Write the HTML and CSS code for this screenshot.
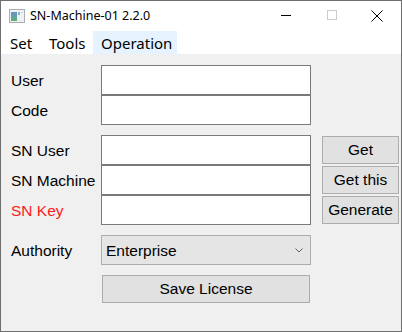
FILE: index.html
```html
<!DOCTYPE html>
<html lang="en">
<head>
    <meta charset="UTF-8">
    <title>SN-Machine-01 2.2.0</title>
    <link rel="stylesheet" href="styles.css">
</head>
<body>
    <div class="window">
        <div class="titlebar">
            <svg class="app-icon" width="16" height="14" viewBox="0 0 16 14">
                <defs>
                    <linearGradient id="g" x1="0" y1="0" x2="0" y2="1">
                        <stop offset="0" stop-color="#6a8fc9"/>
                        <stop offset="1" stop-color="#5fb07a"/>
                    </linearGradient>
                </defs>
                <rect x="0.5" y="0.5" width="15" height="13" fill="#eef1f3" stroke="#a9adb1"/>
                <rect x="2" y="3" width="6" height="9" fill="url(#g)"/>
                <rect x="9" y="3" width="2" height="3" fill="#8fb5c9"/>
                <rect x="12" y="3" width="2" height="1" fill="#c5d3da"/>
            </svg>
            <span class="title">SN-Machine-01 2.2.0</span>
            <div class="controls">
                <span class="ctl min"></span>
                <span class="ctl max"></span>
                <span class="ctl close">
                    <svg width="12" height="12" viewBox="0 0 12 12">
                        <path d="M0.5 0.5 L11.5 11.5 M11.5 0.5 L0.5 11.5" stroke="#000" stroke-width="1"/>
                    </svg>
                </span>
            </div>
        </div>
        <div class="menubar">
            <span class="menu-item set">Set</span>
            <span class="menu-item tools">Tools</span>
            <span class="menu-item active">Operation</span>
        </div>
        <div class="content">
            <div class="group">
                <div class="row"><label>User</label><input class="field" type="text"></div>
                <div class="row"><label>Code</label><input class="field" type="text"></div>
            </div>
            <div class="group sn">
                <div class="fields">
                    <div class="row"><label>SN User</label><input class="field" type="text"></div>
                    <div class="row"><label>SN Machine</label><input class="field" type="text"></div>
                    <div class="row"><label class="red">SN Key</label><input class="field" type="text"></div>
                </div>
                <div class="buttons">
                    <button class="btn">Get</button>
                    <button class="btn">Get this</button>
                    <button class="btn">Generate</button>
                </div>
            </div>
            <div class="group">
                <div class="row">
                    <label>Authority</label>
                    <div class="select">
                        <span>Enterprise</span>
                        <svg width="8" height="5" viewBox="0 0 8 5">
                            <path d="M0.5 0.5 L4 4 L7.5 0.5" fill="none" stroke="#606060" stroke-width="1"/>
                        </svg>
                    </div>
                </div>
            </div>
            <div class="save-row">
                <button class="btn save">Save License</button>
            </div>
        </div>
    </div>
</body>
</html>
```

FILE: styles.css
```css
body {
    margin: 0;
    background: #fff;
}
.window {
    width: 402px;
    height: 332px;
    box-sizing: border-box;
    border: 1px solid #6f6f6f;
    display: flex;
    flex-direction: column;
    background: #f0f0f0;
    overflow: hidden;
}
.titlebar {
    height: 30px;
    background: #fff;
    display: flex;
    align-items: center;
    font-family: "Noto Sans", sans-serif;
    font-size: 12.5px;
    color: #000;
}
.app-icon {
    margin-left: 8px;
    margin-top: -1px;
}
.title {
    margin-left: 5px;
    margin-top: -1px;
}
.controls {
    margin-left: auto;
    display: flex;
    height: 100%;
}
.ctl {
    width: 46px;
    height: 100%;
    display: flex;
    align-items: center;
    justify-content: center;
}
.min::before {
    content: "";
    width: 10px;
    height: 1px;
    background: #000;
    margin-top: -1px;
}
.max::before {
    content: "";
    width: 8px;
    height: 8px;
    border: 1px solid #cccccc;
    margin-top: -2px;
}
.close svg {
    margin-top: -1px;
    margin-right: 2px;
}
.menubar {
    height: 23px;
    background: #fff;
    display: flex;
    align-items: stretch;
    font-family: "Noto Sans", sans-serif;
    font-size: 15px;
    color: #000;
    padding-left: 1px;
}
.menu-item {
    display: flex;
    align-items: center;
    box-sizing: border-box;
    padding-left: 8px;
}
.menu-item.set {
    width: 39px;
}
.menu-item.tools {
    width: 52px;
}
.menu-item.active {
    width: 84px;
    background: #e5f3ff;
}
.content {
    padding: 11px 0 0 10px;
    font-family: "Liberation Sans", Arial, sans-serif;
    font-size: 15.5px;
    color: #000;
}
.group {
    margin-bottom: 10px;
}
.row {
    display: flex;
    align-items: center;
    height: 30px;
}
.row label {
    width: 90px;
    padding-top: 1px;
}
.row label.red {
    color: #ff1a1a;
}
.field {
    width: 210px;
    height: 30px;
    box-sizing: border-box;
    margin: 0;
    border: 1px solid #7a7a7a;
    background: #fff;
    outline: none;
}
.sn {
    display: flex;
}
.buttons {
    display: flex;
    flex-direction: column;
    gap: 2px;
    margin-left: 11px;
    padding-top: 1px;
}
.btn {
    width: 77px;
    height: 28px;
    margin: 0;
    padding: 0;
    border: 1px solid #adadad;
    background: #e1e1e1;
    font-family: "Liberation Sans", Arial, sans-serif;
    font-size: 15.5px;
    color: #000;
}
.select {
    width: 210px;
    height: 30px;
    box-sizing: border-box;
    border: 1px solid #adadad;
    background: #e5e5e5;
    display: flex;
    align-items: center;
    justify-content: space-between;
    padding: 1px 7px 0 4px;
}
.select svg {
    margin-top: -1px;
}
.save-row {
    padding-left: 91px;
    margin-top: 1px;
}
.btn.save {
    width: 208px;
}
```
